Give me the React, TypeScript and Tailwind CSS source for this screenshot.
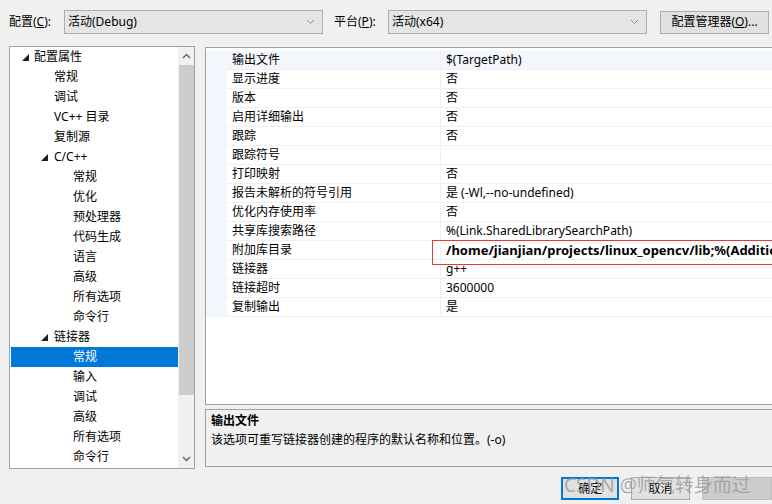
import React from "react";

const font = { fontFamily: '"Noto Sans", "Noto Sans CJK SC", sans-serif' };

type TreeItem = { label: string; level: number; open?: boolean; selected?: boolean };

const tree: TreeItem[] = [
  { label: "配置属性", level: 0, open: true },
  { label: "常规", level: 1 },
  { label: "调试", level: 1 },
  { label: "VC++ 目录", level: 1 },
  { label: "复制源", level: 1 },
  { label: "C/C++", level: 1, open: true },
  { label: "常规", level: 2 },
  { label: "优化", level: 2 },
  { label: "预处理器", level: 2 },
  { label: "代码生成", level: 2 },
  { label: "语言", level: 2 },
  { label: "高级", level: 2 },
  { label: "所有选项", level: 2 },
  { label: "命令行", level: 2 },
  { label: "链接器", level: 1, open: true },
  { label: "常规", level: 2, selected: true },
  { label: "输入", level: 2 },
  { label: "调试", level: 2 },
  { label: "高级", level: 2 },
  { label: "所有选项", level: 2 },
  { label: "命令行", level: 2 },
];

const rows: [string, string][] = [
  ["输出文件", "$(TargetPath)"],
  ["显示进度", "否"],
  ["版本", "否"],
  ["启用详细输出", "否"],
  ["跟踪", "否"],
  ["跟踪符号", ""],
  ["打印映射", "否"],
  ["报告未解析的符号引用", "是 (-Wl,--no-undefined)"],
  ["优化内存使用率", "否"],
  ["共享库搜索路径", "%(Link.SharedLibrarySearchPath)"],
  ["附加库目录", "/home/jianjian/projects/linux_opencv/lib;%(Additio"],
  ["链接器", "g++"],
  ["链接超时", "3600000"],
  ["复制输出", "是"],
];

const Triangle = () => (
  <svg width="7" height="7" viewBox="0 0 7 7" className="shrink-0">
    <polygon points="7,0 7,7 0,7" fill="#1e1e1e" />
  </svg>
);

const Chevron = ({ up }: { up?: boolean }) => (
  <svg width="9" height="6" viewBox="0 0 9 6">
    <polyline
      points={up ? "1,5 4.5,1.5 8,5" : "1,1 4.5,4.5 8,1"}
      fill="none"
      stroke="#606060"
      strokeWidth="1.3"
    />
  </svg>
);

const Select = ({ value }: { value: string }) => (
  <div className="flex items-center justify-between w-[259px] h-[24px] bg-[#e5e5e5] border border-[#adadad] pl-[3px] pr-[7px]">
    <span>{value}</span>
    <svg width="9" height="6" viewBox="0 0 9 6">
      <polyline points="1,1 4.5,4.5 8,1" fill="none" stroke="#8a8a8a" strokeWidth="1" />
    </svg>
  </div>
);

export default function App() {
  return (
    <div
      className="relative w-[772px] h-[504px] overflow-hidden bg-[#f0f0f0] text-[12px] text-black leading-none"
      style={font}
    >
      {/* top bar */}
      <div className="flex items-center h-[44px] pl-[9px]">
        <span className="w-[55px]">
          配置(<u>C</u>):
        </span>
        <Select value="活动(Debug)" />
        <span className="ml-[11px] w-[54px]">
          平台(<u>P</u>):
        </span>
        <Select value="活动(x64)" />
        <div className="ml-[13px] flex items-center justify-center w-[109px] h-[23px] bg-[#e1e1e1] border border-[#adadad]">
          配置管理器(<u>O</u>)...
        </div>
      </div>

      {/* middle */}
      <div className="flex">
        {/* tree */}
        <div className="shrink-0 ml-[9px] mt-[2px] w-[186px] h-[423px] border border-[#a0a0a0] bg-white flex overflow-hidden">
          <div className="flex-1 min-w-0">
            {tree.map((t, i) => (
              <div
                key={i}
                className={`flex items-center h-[20px] ${t.selected ? "bg-[#0078d7] text-white ml-[1px]" : ""}`}
              >
                <div
                  className={`flex items-center shrink-0 ${t.level === 0 ? "w-[24px] pl-[12px]" : t.level === 1 ? "w-[44px] pl-[31px]" : t.selected ? "w-[62px]" : "w-[63px]"}`}
                >
                  {t.open && <Triangle />}
                </div>
                <span>{t.label}</span>
              </div>
            ))}
          </div>
          <div className="w-[16px] shrink-0 bg-[#f0f0f0] flex flex-col items-center">
            <div className="h-[18px] flex items-center justify-center">
              <Chevron up />
            </div>
            <div className="w-[15px] h-[330px] bg-[#cdcdcd]" />
            <div className="flex-1" />
            <div className="h-[18px] flex items-center justify-center">
              <Chevron />
            </div>
          </div>
        </div>

        {/* right column */}
        <div className="shrink-0 ml-[10px] mt-[3px] flex flex-col w-[580px]">
          <div className="relative h-[358px] border border-[#a0a0a0] bg-white pt-[3px]">
            {rows.map(([k, v], i) => (
              <div key={i} className="flex h-[19px] overflow-hidden">
                <div className="w-[21px] shrink-0 bg-[#f3f6fd]" />
                <div
                  className={`flex flex-1 min-w-0 border-b border-[#f0f0f0] ${i === 0 ? "bg-[#f3f6fd]" : ""}`}
                >
                  <div className="w-[214px] shrink-0 pl-[5px] flex items-center border-r border-[#f0f0f0]">{k}</div>
                  <div
                    className={`flex-1 min-w-0 pl-[5px] flex items-center whitespace-nowrap overflow-hidden ${i === 10 ? "font-bold text-[13px]" : ""}`}
                  >
                    {v}
                  </div>
                </div>
              </div>
            ))}
            <div className="absolute left-[226px] top-[192px] w-[360px] h-[25px] border border-[#e53935]" />
          </div>
          <div className="mt-[4px] h-[58px] border border-[#a0a0a0] bg-[#f0f0f0] pl-[5px] pt-[5px]">
            <div className="font-bold">输出文件</div>
            <div className="mt-[7px]">该选项可重写链接器创建的程序的默认名称和位置。(-o)</div>
          </div>
        </div>
      </div>

      {/* bottom buttons */}
      <div className="flex mt-[8px] ml-[561px] gap-[12px]">
        <div className="w-[62px] h-[23px] flex items-center justify-center bg-[#e1e1e1] border-2 border-[#0078d7]">
          确定
        </div>
        <div className="w-[62px] h-[23px] flex items-center justify-center bg-[#e1e1e1] border border-[#adadad]">
          取消
        </div>
        <div className="w-[75px] h-[23px] bg-[#cccccc] border border-[#bfbfbf]" />
      </div>

      {/* watermark */}
      <div className="absolute left-[564px] top-[476px] text-[19px] text-[#9a9a9a]/80 whitespace-nowrap">
        CSDN @师气转身而过
      </div>
    </div>
  );
}
